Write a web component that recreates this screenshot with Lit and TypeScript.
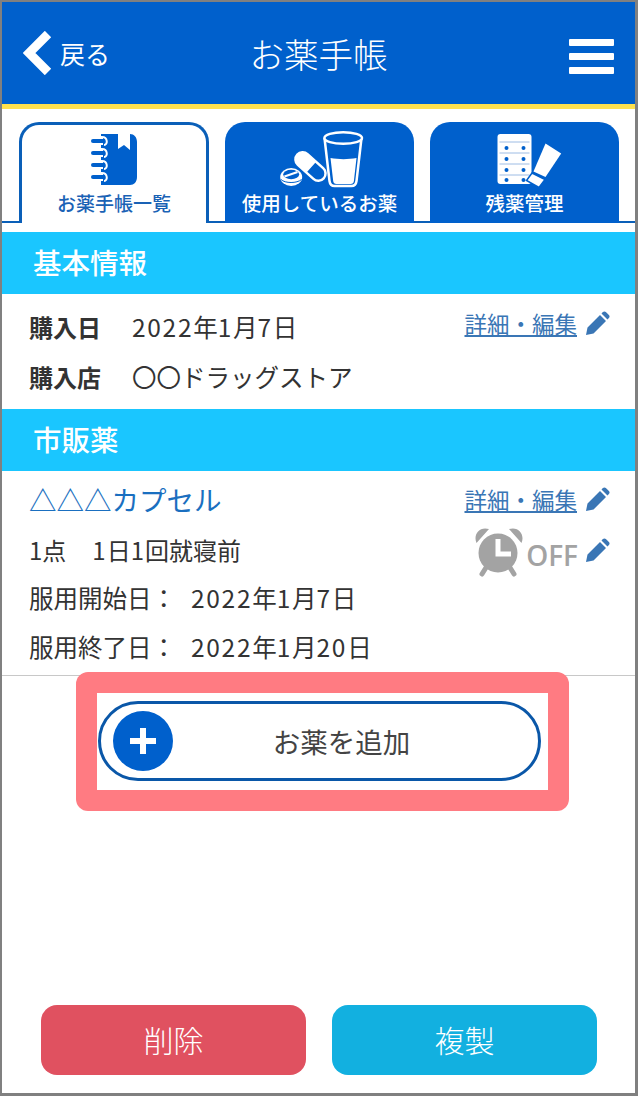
import { LitElement, css, html, svg } from "lit";
import { customElement } from "lit/decorators.js";

const BLUE = "#0060cc";

// digits in the reference are wider than Noto's, so they get some tracking
const nums = (text: string) =>
  text.split(/(\d+)/).map((part, i) => (i % 2 ? html`<span class="num">${part}</span>` : part));

const pencil = html`<svg class="pencil" viewBox="0 0 24 24" width="24" height="24">
  <path fill="#3a76b5" d="M0 24l1.500-7.500L14 4l6 6L7.500 22.500zM15.500 2.500l1.400-1.400c.9-.9 2.100-.9 3 0l3 3c.9.9.9 2.100 0 3L21.500 8.500z"/>
</svg>`;

const noteIcon = html`<svg viewBox="0 0 60 60" width="60" height="60">
  <path fill="${BLUE}" d="M17 6h17v15l6-4 6 5V6c4 0 7 3 7 8v35c0 5-3 8-7 8H17z"/>
  ${[13, 25, 37, 49].map(
    (y) => svg`<path fill="none" stroke="#fff" stroke-width="8" d="M15 ${y}h4"/>
      <path fill="none" stroke="#fff" stroke-width="2" d="M16 ${y - 4}h2c6 0 6 8 2 8"/>
      <path fill="none" stroke="${BLUE}" stroke-width="4" stroke-linecap="round" d="M9 ${y}h10"/>`
  )}
</svg>`;

const medicineIcon = html`<svg viewBox="-5.500 3 110 65" width="110" height="65">
  <g transform="translate(40 41.500) rotate(42)">
    <rect x="-19" y="-8.500" width="38" height="17" rx="8.500" fill="#fff"/>
    <path fill="${BLUE}" d="M1-6h9.500a6 6 0 0 1 0 12H1z"/>
  </g>
  <ellipse cx="20.700" cy="52" rx="11" ry="9" fill="#fff"/>
  <ellipse cx="20.700" cy="49.500" rx="8" ry="4.700" fill="${BLUE}"/>
  <path d="M14 51.500l13-4.500" stroke="#fff" stroke-width="2.200"/>
  <path d="M10.500 54.500c4 4 16 4 20.500 0" fill="none" stroke="${BLUE}" stroke-width="1"/>
  <path d="M54 13l5 43c.4 3 2 5 5 5h17c3 0 4.600-2 5-5l5-43" fill="${BLUE}" stroke="#fff" stroke-width="2.500"/>
  <ellipse cx="72.700" cy="13" rx="18.800" ry="5.800" fill="${BLUE}" stroke="#fff" stroke-width="2.500"/>
  <path fill="#fff" d="M60 33c8 1.500 18 1.500 26 0l-2.600 23c-.2 2-1.300 3-3.300 3H66c-2 0-3.100-1-3.300-3z"/>
</svg>`;

const stockIcon = html`<svg viewBox="-10.500 3 90 65" width="90" height="65">
  <rect x="7" y="9" width="34" height="50" rx="3" fill="#fff"/>
  ${[17, 28, 39, 50].map((y) => svg`<path d="M9 ${y}h30" stroke="#9dbce4" stroke-width="1"/>`)}
  ${[23, 34, 45, 55].map(
    (y) => svg`<circle cx="16" cy="${y}" r="2" fill="${BLUE}"/><circle cx="33" cy="${y}" r="2" fill="${BLUE}"/>`
  )}
  <path fill="#fff" d="M55 18.500l15.700 10L55 52l-12-5.500z"/>
  <path fill="#fff" stroke="${BLUE}" stroke-width="1.500" d="M41.500 48l13 6.500-6 8L36 55.500z"/>
</svg>`;

const alarmIcon = html`<svg class="alarm-ic" viewBox="5 3 50 53" width="50" height="53">
  <path fill="#a3a3a3" d="M7.500 20C4 12 10 3 20 6zM52.500 20C56 12 50 3 40 6z"/>
  <path stroke="#a3a3a3" stroke-width="5" stroke-linecap="round" d="M18 43l-5 8M40 43l5 8"/>
  <circle cx="29" cy="30" r="19.500" fill="#a3a3a3"/>
  <path fill="none" stroke="#fff" stroke-width="5" d="M29 16v15h13"/>
</svg>`;

@customElement("app-root")
export class AppRoot extends LitElement {
  static styles = css`
    :host {
      display: block;
      font-family: "Noto Sans CJK JP", "Noto Sans", sans-serif;
      color: #333;
    }
    .frame {
      box-sizing: border-box;
      width: 638px;
      height: 1096px;
      border: 3px solid #808080;
      border-width: 2px 3px 3px 2px;
      display: flex;
      flex-direction: column;
      background: #fff;
    }
    .head {
      flex: none;
      height: 107px;
      box-sizing: border-box;
      border-bottom: 5px solid #ffe14d;
      background: #0060cc;
      color: #fff;
      display: grid;
      grid-template-columns: 1fr auto 1fr;
      align-items: center;
      padding: 0 21px;
    }
    .back {
      display: flex;
      align-items: center;
      gap: 7px;
      font-size: 25px;
    }
    .title {
      font-size: 34.500px;
      font-weight: 300;
      line-height: 1;
    }
    .menu {
      justify-self: end;
      display: flex;
      flex-direction: column;
      gap: 6.500px;
      margin-top: 7px;
    }
    .menu span {
      display: block;
      width: 45px;
      height: 7.500px;
      border-radius: 1px;
      background: #fff;
    }
    .tabs {
      flex: none;
      height: 114px;
      box-sizing: border-box;
      padding: 13px 16px 0 17px;
      display: flex;
      align-items: stretch;
      gap: 16px;
      border-bottom: 2px solid #0a5fb8;
      margin-bottom: 9px;
    }
    .tab {
      width: 189px;
      margin-bottom: -2px;
      box-sizing: border-box;
      border-radius: 20px 20px 0 0;
      background: #0060cc;
      color: #fff;
      display: flex;
      flex-direction: column;
      align-items: center;
      font-size: 19.500px;
      font-weight: 500;
      line-height: 1;
    }
    .tab .icon {
      height: 65px;
      margin-top: 6px;
      display: flex;
      align-items: flex-start;
      justify-content: center;
    }
    .tab .label {
      white-space: nowrap;
    }
    .tab.on {
      width: 190px;
      background: #fff;
      color: #1a62b5;
      border: 3px solid #0a5fb8;
      border-bottom: 0;
    }
    .tab.on .icon {
      margin-top: 3px;
    }
    .tab.on .label {
      font-size: 19px;
    }
    .section {
      flex: none;
      height: 62px;
      box-sizing: border-box;
      padding-left: 31px;
      background: #1ac6ff;
      color: #fff;
      font-size: 28.500px;
      font-weight: 500;
      line-height: 60px;
    }
    .info {
      flex: none;
      height: 115px;
      box-sizing: border-box;
      padding: 7px 25px 0 27px;
      font-size: 24.500px;
    }
    .row {
      display: flex;
      align-items: center;
      height: 50px;
    }
    .row b {
      width: 103px;
      font-size: 24px;
      font-weight: 700;
    }
    .num {
      letter-spacing: 1.700px;
    }
    .link {
      display: flex;
      align-items: center;
      gap: 9px;
      margin-left: auto;
      height: 36px;
      font-size: 22.500px;
      line-height: 36px;
      color: #3a76b5;
    }
    .link u {
      text-underline-offset: 2px;
    }
    .info .row:first-child .link {
      margin-top: -6px;
    }
    .drug {
      flex: none;
      height: 205px;
      box-sizing: border-box;
      padding: 10px 25px 0 27px;
      border-bottom: 1px solid #c8c8c8;
      font-size: 24.500px;
    }
    .drug .row {
      height: 49px;
    }
    .drug .name {
      height: 36px;
      margin-bottom: 9px;
      font-size: 27.500px;
      color: #1a6fc0;
    }
    .drug .name .link {
      font-size: 22.500px;
    }
    .drug .dose {
      height: 47px;
      font-size: 24px;
    }
    .dose > span + span {
      margin-left: 26px;
    }
    .dose .num {
      letter-spacing: 1px;
    }
    .alarm {
      display: flex;
      align-items: center;
      margin-left: auto;
    }
    .alarm-ic {
      margin: 3px 0 -3px;
    }
    .alarm .off {
      margin: 5px 8px -5px 2px;
      font-family: "Open Sans", sans-serif;
      font-size: 28px;
      font-weight: 600;
      color: #a3a3a3;
    }
    .drug .gap {
      margin-right: 15px;
    }
    .mark {
      flex: none;
      align-self: center;
      width: 493px;
      height: 139px;
      box-sizing: border-box;
      margin-top: -4px;
      margin-left: 8px;
      padding: 21px;
      border-radius: 12px;
      background: #ff7b82;
      position: relative;
    }
    .mark-in {
      height: 97px;
      background: #fff;
      padding: 8px 7px 0 1px;
      box-sizing: border-box;
    }
    .add {
      height: 80px;
      box-sizing: border-box;
      border: 3px solid #0a57a8;
      border-radius: 40px;
      display: grid;
      grid-template-columns: 60px 1fr 17px;
      align-items: center;
      padding: 0 11px 0 12px;
      font-size: 27.500px;
      color: #444;
      text-align: center;
    }
    .plus {
      width: 60px;
      height: 60px;
      border-radius: 50%;
      background: #0060cc;
      display: flex;
      align-items: center;
      justify-content: center;
    }
    .foot {
      margin-top: auto;
      padding: 0 38px 18px 39px;
      display: flex;
      gap: 26px;
    }
    .btn {
      flex: 1;
      height: 70px;
      box-sizing: border-box;
      padding-bottom: 3px;
      border-radius: 16px;
      color: #fff;
      font-size: 30px;
      font-weight: 300;
      display: flex;
      align-items: center;
      justify-content: center;
    }
    .del {
      background: #e05160;
    }
    .copy {
      background: #12b0e0;
    }
  `;

  render() {
    return html`<div class="frame">
      <div class="head">
        <div class="back">
          <svg viewBox="0 0 30 44" width="30" height="44">
            <path d="M25 3L6 22l19 19" fill="none" stroke="#fff" stroke-width="9"/>
          </svg>
          <span>戻る</span>
        </div>
        <div class="title">お薬手帳</div>
        <div class="menu"><span></span><span></span><span></span></div>
      </div>
      <div class="tabs">
        <div class="tab on"><div class="icon">${noteIcon}</div><div class="label">お薬手帳一覧</div></div>
        <div class="tab"><div class="icon">${medicineIcon}</div><div class="label">使用しているお薬</div></div>
        <div class="tab"><div class="icon">${stockIcon}</div><div class="label">残薬管理</div></div>
      </div>
      <div class="section">基本情報</div>
      <div class="info">
        <div class="row"><b>購入日</b><span>${nums("2022年1月7日")}</span><div class="link"><u>詳細・編集</u>${pencil}</div></div>
        <div class="row"><b>購入店</b><span>〇〇ドラッグストア</span></div>
      </div>
      <div class="section">市販薬</div>
      <div class="drug">
        <div class="row name"><span>△△△カプセル</span><div class="link"><u>詳細・編集</u>${pencil}</div></div>
        <div class="row dose"><span>1点</span><span>${nums("1日1回就寝前")}</span>
          <div class="alarm">${alarmIcon}<span class="off">OFF</span>${pencil}</div>
        </div>
        <div class="row"><span class="gap">服用開始日：</span><span>${nums("2022年1月7日")}</span></div>
        <div class="row"><span class="gap">服用終了日：</span><span>${nums("2022年1月20日")}</span></div>
      </div>
      <div class="mark">
        <div class="mark-in">
          <div class="add">
            <div class="plus">
              <svg viewBox="0 0 28 28" width="28" height="28"><path d="M14 1v26M1 14h26" stroke="#fff" stroke-width="6"/></svg>
            </div>
            <span>お薬を追加</span>
          </div>
        </div>
      </div>
      <div class="foot">
        <div class="btn del">削除</div>
        <div class="btn copy">複製</div>
      </div>
    </div>`;
  }
}
